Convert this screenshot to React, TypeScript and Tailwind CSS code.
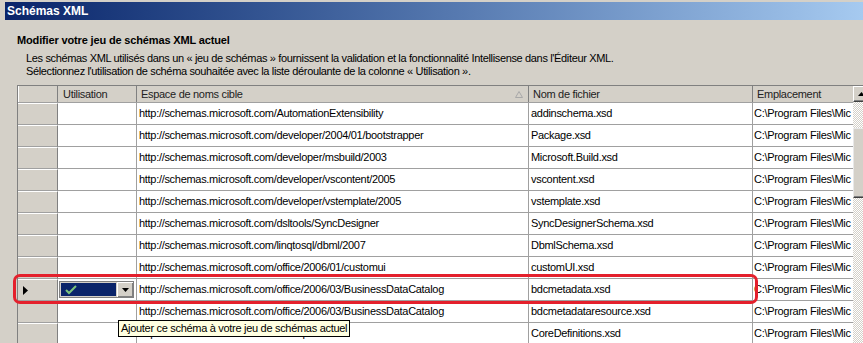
import React from 'react';

const rows = [
  ['http://schemas.microsoft.com/AutomationExtensibility', 'addinschema.xsd'],
  ['http://schemas.microsoft.com/developer/2004/01/bootstrapper', 'Package.xsd'],
  ['http://schemas.microsoft.com/developer/msbuild/2003', 'Microsoft.Build.xsd'],
  ['http://schemas.microsoft.com/developer/vscontent/2005', 'vscontent.xsd'],
  ['http://schemas.microsoft.com/developer/vstemplate/2005', 'vstemplate.xsd'],
  ['http://schemas.microsoft.com/dsltools/SyncDesigner', 'SyncDesignerSchema.xsd'],
  ['http://schemas.microsoft.com/linqtosql/dbml/2007', 'DbmlSchema.xsd'],
  ['http://schemas.microsoft.com/office/2006/01/customui', 'customUI.xsd'],
  ['http://schemas.microsoft.com/office/2006/03/BusinessDataCatalog', 'bdcmetadata.xsd'],
  ['http://schemas.microsoft.com/office/2006/03/BusinessDataCatalog', 'bdcmetadataresource.xsd'],
  ['http://schemas.microsoft.com/sharepoint/', 'CoreDefinitions.xsd'],
];

const SELECTED = 8;

const UsageCombo: React.FC = () => (
  <div className="flex h-[17px] w-[75px] ml-[1px] border border-[#808080]">
    <div className="flex-1 bg-[#0a246a] flex items-center pl-[4px] border border-[#d4d0c8]">
      <svg width="12" height="10" viewBox="0 0 12 10">
        <polyline points="1,5 4,8 11,1" fill="none" stroke="#7cc47c" strokeWidth="2" />
      </svg>
    </div>
    <div className="w-[16px] bg-[#d4d0c8] border-l border-t border-white border-r-[#404040] border-b-[#404040] flex items-center justify-center shadow-[inset_-1px_-1px_0_#808080]">
      <svg width="7" height="4" viewBox="0 0 7 4">
        <polygon points="0,0 7,0 3.5,4" fill="#000" />
      </svg>
    </div>
  </div>
);

const App: React.FC = () => {
  return (
    <div className="relative w-[863px] h-[343px] overflow-hidden bg-[#d4d0c8] text-[11px] text-black font-['Liberation_Sans',Arial,sans-serif] leading-[13px]">
      {/* Title bar */}
      <div className="ml-[5px] mt-[2px] h-[18px] bg-gradient-to-r from-[#0a246a] to-[#a6caf0] flex items-center pl-[2px]">
        <span className="text-white font-bold text-[12px]">Schémas XML</span>
      </div>

      {/* Heading and description */}
      <div className="pl-[17px] mt-[14px] font-bold text-[11px] tracking-[-0.15px]">Modifier votre jeu de schémas XML actuel</div>
      <div className="pl-[26px] mt-[5px] tracking-[-0.35px]">
        <div>Les schémas XML utilisés dans un « jeu de schémas » fournissent la validation et la fonctionnalité Intellisense dans l'Éditeur XML.</div>
        <div>Sélectionnez l'utilisation de schéma souhaitée avec la liste déroulante de la colonne « Utilisation ».</div>
      </div>

      {/* Grid */}
      <div className="ml-[17px] mt-[7px] border-l border-t border-[#808080] flex w-[880px] tracking-[-0.3px]">
        <div className="flex flex-col">
          {/* Header */}
          <div className="flex h-[17px] border-b border-[#a0a0a0] bg-[#d4d0c8]">
            <div className="w-[40px] border-r border-[#808080] border-l border-l-white" />
            <div className="w-[79px] border-r border-[#808080] pl-[5px] flex items-center text-[#222]">Utilisation</div>
            <div className="w-[392px] border-r border-[#808080] pl-[4px] pr-[5px] flex items-center justify-between text-[#222]">
              <span>Espace de noms cible</span>
              <svg width="8" height="7" viewBox="0 0 8 7">
                <polygon points="4,0.5 7.5,6.5 0.5,6.5" fill="none" stroke="#a8a8a8" strokeWidth="1" />
              </svg>
            </div>
            <div className="w-[224px] border-r border-[#808080] pl-[4px] flex items-center text-[#222]">Nom de fichier</div>
            <div className="w-[100px] pl-[4px] flex items-center text-[#222] whitespace-nowrap overflow-hidden">Emplacement</div>
          </div>

          {/* Rows */}
          {rows.map(([ns, file], i) => (
            <div key={i} className="flex h-[22px]">
              <div className="w-[40px] bg-[#d4d0c8] border-t border-t-white border-b border-b-[#a0a0a0] border-r border-r-[#808080] flex items-center pl-[5px]">
                {i === SELECTED && (
                  <svg width="5" height="9" viewBox="0 0 5 9">
                    <polygon points="0,0 5,4.5 0,9" fill="#000" />
                  </svg>
                )}
              </div>
              <div className="w-[79px] bg-white border-b border-r border-[#a0a0a0] flex items-center">
                {i === SELECTED && <UsageCombo />}
              </div>
              <div className="w-[392px] bg-white border-b border-r border-[#a0a0a0] pl-[2px] flex items-center whitespace-nowrap overflow-hidden">{ns}</div>
              <div className="w-[224px] bg-white border-b border-r border-[#a0a0a0] pl-[2px] flex items-center whitespace-nowrap overflow-hidden">{file}</div>
              <div className="w-[100px] bg-white border-b border-[#a0a0a0] pl-[1px] flex items-center whitespace-nowrap overflow-hidden">C:\Program Files\Mic</div>
            </div>
          ))}
        </div>

        {/* Scrollbar */}
        <div className="w-[16px] flex flex-col bg-[repeating-conic-gradient(#ffffff_0_25%,#d4d0c8_0_50%)] bg-[length:2px_2px]">
          <div className="h-[16px] bg-[#d4d0c8] border-l border-t border-white border-r-[#404040] border-b border-b-[#404040] flex items-center justify-center shadow-[inset_-1px_-1px_0_#808080]">
            <svg width="7" height="4" viewBox="0 0 7 4">
              <polygon points="3.5,0 7,4 0,4" fill="#000" />
            </svg>
          </div>
          <div className="h-[26px]" />
          <div className="h-[70px] bg-[#d4d0c8] border-l border-t border-[#e8e8e8] border-b border-b-[#404040] shadow-[inset_-1px_-1px_0_#808080]" />
        </div>
      </div>

      {/* Highlight around the selected row */}
      <div className="absolute left-[13px] top-[274px] w-[745px] h-[30px] border-[3px] border-[#e4202c] rounded-[7px] pointer-events-none" />

      {/* Tooltip */}
      <div className="absolute left-[118px] top-[320px] h-[17px] px-[2px] bg-[#ffffe1] border border-black flex items-center whitespace-nowrap tracking-[-0.3px]">
        Ajouter ce schéma à votre jeu de schémas actuel
      </div>
    </div>
  );
};

export default App;
